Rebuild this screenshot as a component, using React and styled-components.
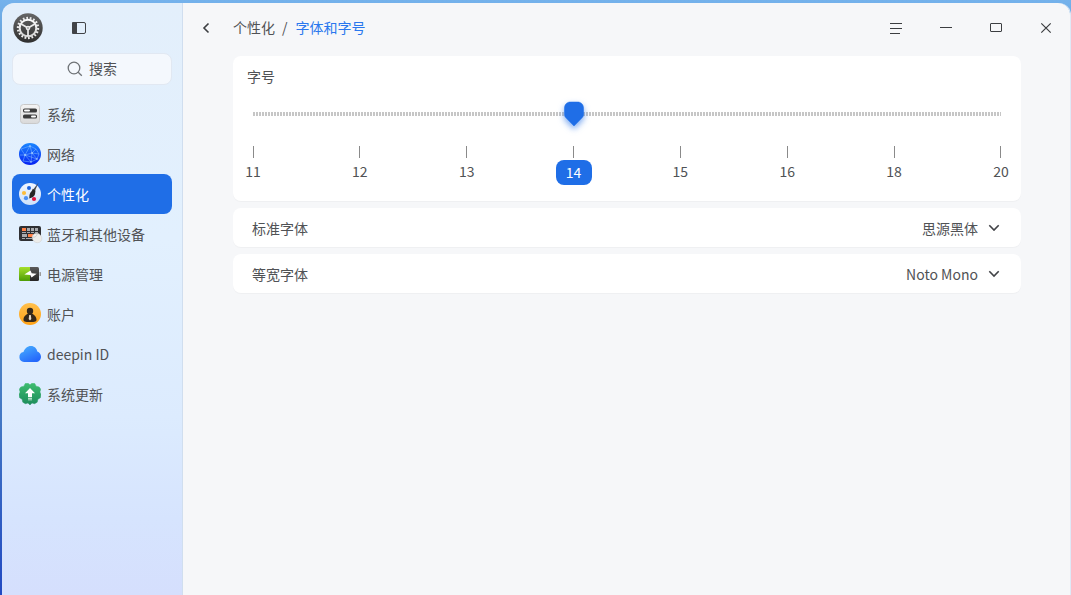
import React, { useState } from 'react';
import styled, { createGlobalStyle } from 'styled-components';

const sizes = [11, 12, 13, 14, 15, 16, 18, 20];

function GearLogo() {
    return (
        <svg width="30" height="30" viewBox="0 0 30 30" aria-hidden="true">
            <defs>
                <linearGradient id="gearBg" x1="0" y1="0" x2="0" y2="1">
                    <stop offset="0" stopColor="#666666" />
                    <stop offset="1" stopColor="#2f2f2f" />
                </linearGradient>
                <linearGradient id="gearFg" x1="0" y1="0" x2="0" y2="1">
                    <stop offset="0" stopColor="#ffffff" />
                    <stop offset="1" stopColor="#d2d2d2" />
                </linearGradient>
            </defs>
            <circle cx="15" cy="15" r="14.7" fill="url(#gearBg)" />
            <g fill="none" stroke="#ececec">
                <circle cx="15" cy="15" r="10" strokeWidth="2.4" pathLength="36" strokeDasharray="1 1" />
                <circle cx="15" cy="15" r="8.300" strokeWidth="2" stroke="url(#gearFg)" />
                <path d="M15 15v8M15 15L8.200 11M15 15l6.800-4" strokeWidth="1.700" />
            </g>
            <circle cx="15" cy="15" r="2.300" fill="#ececec" />
            <circle cx="15" cy="15" r="0.800" fill="#777777" />
        </svg>
    )
}

function SystemIcon() {
    return (
        <svg width="22" height="22" viewBox="0 0 22 22" aria-hidden="true">
            <defs>
                <linearGradient id="sysBg" x1="0" y1="0" x2="0" y2="1">
                    <stop offset="0" stopColor="#f4f4f4" />
                    <stop offset="1" stopColor="#d9d9d9" />
                </linearGradient>
            </defs>
            <rect x="1.500" y="1.500" width="19" height="19" rx="3" fill="url(#sysBg)" stroke="#c9c9c9" />
            <rect x="4" y="5.500" width="14" height="4" rx="1.600" fill="#3b3b3b" />
            <rect x="5" y="6.500" width="6" height="2" rx="1" fill="#ffffff" />
            <rect x="4" y="11.500" width="14" height="4" rx="1.600" fill="#3b3b3b" />
            <rect x="12" y="12.500" width="5" height="2" rx="1" fill="#ffffff" />
        </svg>
    )
}

function NetworkIcon() {
    return (
        <svg width="22" height="22" viewBox="0 0 22 22" aria-hidden="true">
            <defs>
                <linearGradient id="netBg" x1="0" y1="0" x2="0" y2="1">
                    <stop offset="0" stopColor="#1a86ff" />
                    <stop offset="1" stopColor="#0722f2" />
                </linearGradient>
            </defs>
            <circle cx="11" cy="11" r="11" fill="url(#netBg)" />
            <path
                d="M2 6l9-3 6 3 3 5-7-1-2-7-5 9 7-2 4-4M1 12l5 0 6 7 1-9M6 12L4 18l8 1 6-3-5-6M18 16l2-5M6 12L2 6M6 12l12 4"
                fill="none"
                stroke="#8cc4ff"
                strokeWidth="0.600"
                opacity="0.800"
            />
            <g fill="#c8e4ff">
                <circle cx="11" cy="3" r="0.700" />
                <circle cx="13" cy="10" r="0.800" />
                <circle cx="6" cy="12" r="0.800" />
                <circle cx="12" cy="19" r="0.700" />
                <circle cx="18" cy="16" r="0.700" />
            </g>
        </svg>
    )
}

function PaletteIcon() {
    return (
        <svg width="22" height="22" viewBox="0 0 22 22" aria-hidden="true">
            <defs>
                <linearGradient id="palBg" x1="0" y1="0" x2="0" y2="1">
                    <stop offset="0" stopColor="#f0f6ff" />
                    <stop offset="1" stopColor="#cfe1fa" />
                </linearGradient>
            </defs>
            <circle cx="11" cy="11" r="11" fill="url(#palBg)" />
            <circle cx="10" cy="5" r="2" fill="#1c62dd" />
            <circle cx="5" cy="10" r="2.100" fill="#fdbd3c" />
            <circle cx="7" cy="15.200" r="2.100" fill="#4b90f7" />
            <circle cx="15" cy="16" r="2.100" fill="#e0123f" />
            <path d="M19.600-.5L14.200 6.500l1.800 1.300z" fill="#4a4a4a" />
            <path d="M13.800 5.800l2.800 2c-.6 1.400-.2 2.200-.6 3.400-.7 2.300-2.700 3.600-5.800 4.200.4-1.600 0-2.700.5-4.200.6-2 2.300-2.800 3.100-5.400z" fill="#252525" />
        </svg>
    )
}

function KeyboardIcon() {
    return (
        <svg width="24" height="22" viewBox="0 0 24 22" aria-hidden="true">
            <rect x="0" y="3" width="22" height="15" rx="2" fill="#2f3033" />
            <g fill="#ff8147">
                <rect x="3" y="5" width="4" height="3" />
                <rect x="9" y="11" width="5" height="3" />
            </g>
            <g fill="#a9abae">
                <rect x="8" y="5" width="3" height="3" />
                <rect x="12" y="5" width="3" height="3" />
                <rect x="16" y="5" width="3" height="3" />
                <rect x="3" y="9" width="4" height="1" />
                <rect x="8" y="9" width="3" height="1" />
                <rect x="12" y="9" width="3" height="1" />
                <rect x="16" y="9" width="3" height="1" />
                <rect x="3" y="11" width="5" height="3" />
                <rect x="3" y="15" width="3" height="1" />
                <rect x="7" y="15" width="6" height="1" />
            </g>
            <ellipse cx="18" cy="15" rx="5" ry="4.500" transform="rotate(40 18 15)" fill="#ececea" stroke="#cfcfcd" strokeWidth="0.500" />
            <path d="M14 14c2 .6 3.600-.6 4.500-3.500" fill="none" stroke="#bdbdbb" strokeWidth="0.600" />
        </svg>
    )
}

function BatteryIcon() {
    return (
        <svg width="22" height="22" viewBox="0 0 22 22" aria-hidden="true">
            <defs>
                <linearGradient id="batGreen" x1="0" y1="0" x2="0" y2="1">
                    <stop offset="0" stopColor="#a5df2c" />
                    <stop offset="1" stopColor="#4c9c05" />
                </linearGradient>
                <linearGradient id="batDark" x1="0" y1="0" x2="0" y2="1">
                    <stop offset="0" stopColor="#5a5a5a" />
                    <stop offset="1" stopColor="#252525" />
                </linearGradient>
            </defs>
            <path d="M11 4h7.500a1.500 1.500 0 0 1 1.500 1.500v11a1.500 1.500 0 0 1-1.500 1.500H11z" fill="url(#batDark)" />
            <path d="M1.500 4H11v14H1.500A1.500 1.500 0 0 1 0 16.500v-11A1.500 1.500 0 0 1 1.500 4z" fill="url(#batGreen)" />
            <rect x="20.500" y="9" width="1.500" height="4" rx="0.500" fill="#9a9a9a" />
            <path d="M11.500 7.500l1.200 2.700 5 .5-5.200 3.800-1.200-2.500-6-.5z" fill="#ffffff" />
        </svg>
    )
}

function AccountIcon() {
    return (
        <svg width="22" height="22" viewBox="0 0 22 22" aria-hidden="true">
            <defs>
                <linearGradient id="accBg" x1="0" y1="0" x2="0" y2="1">
                    <stop offset="0" stopColor="#ffc04d" />
                    <stop offset="1" stopColor="#ffa216" />
                </linearGradient>
            </defs>
            <circle cx="11" cy="11" r="11" fill="url(#accBg)" />
            <circle cx="11" cy="8" r="3.200" fill="#35291b" />
            <path d="M9.500 10h3c.3 1.200 4.800 1.800 5 6.500.1 2-1.500 2.500-6.500 2.500s-6.600-.5-6.500-2.500c.2-4.700 4.700-5.300 5-6.500z" fill="#35291b" />
            <path d="M10.200 12h1.600l.5 4L11 17.500 9.700 16z" fill="#e9dccb" />
        </svg>
    )
}

function CloudIcon() {
    return (
        <svg width="22" height="22" viewBox="0 0 22 22" aria-hidden="true">
            <defs>
                <linearGradient id="cloudBg" x1="0" y1="0" x2="0.600" y2="1">
                    <stop offset="0" stopColor="#48b2ff" />
                    <stop offset="1" stopColor="#2668fb" />
                </linearGradient>
            </defs>
            <path
                d="M5 19a5 5 0 0 1-.5-9.900C5.400 5.700 8.400 3 12 3c3.300 0 5.700 2.300 6.300 5.600C20.500 9.400 22 11.300 22 13.700 22 16.700 19.700 19 17 19z"
                fill="url(#cloudBg)"
            />
        </svg>
    )
}

function UpdateIcon() {
    return (
        <svg width="22" height="22" viewBox="0 0 22 22" aria-hidden="true">
            <defs>
                <linearGradient id="updBg" gradientUnits="userSpaceOnUse" x1="0" y1="0" x2="0" y2="22">
                    <stop offset="0" stopColor="#3fbd6f" />
                    <stop offset="1" stopColor="#1c8c5c" />
                </linearGradient>
            </defs>
            <path
                d="M6.200.6L9 .2 11 1.800 13 .2l2.800.4 1.300 2.600 3.100.8 1.500 2.300-.8 2.700L22 11.500l-.6 3.200-2.500 1.500-.7 3-2.600 1.500-2.600-.7L11 22l-2-2-2.600.7-2.600-1.500-.7-3-2.500-1.500L0 11.500 1.100 9 .3 6.300 1.800 4l3.100-.8z"
                fill="url(#updBg)"
                stroke="url(#updBg)"
                strokeWidth="0.500"
                strokeLinejoin="round"
            />
            <path d="M11 5l5 5.300h-3V14H9v-3.700H6z" fill="#ffffff" />
            <path d="M9 14.700h4v1H9zM9 16.400h4v.8H9z" fill="#e6f7ec" />
        </svg>
    )
}

const menu = [
    { name: '系统', Icon: SystemIcon },
    { name: '网络', Icon: NetworkIcon },
    { name: '个性化', Icon: PaletteIcon },
    { name: '蓝牙和其他设备', Icon: KeyboardIcon },
    { name: '电源管理', Icon: BatteryIcon },
    { name: '账户', Icon: AccountIcon },
    { name: 'deepin ID', Icon: CloudIcon },
    { name: '系统更新', Icon: UpdateIcon },
];

function Sidebar() {
    const [active, setActive] = useState('个性化');

    return (
        <SidebarStyled>
            <div className="side-head">
                <GearLogo />
                <IconButton type="button" aria-label="侧边栏">
                    <svg width="14" height="12" viewBox="0 0 14 12">
                        <rect x="0.500" y="0.500" width="13" height="11" rx="1.500" fill="none" stroke="#414347" />
                        <path d="M1 0h4v12H1a1 1 0 0 1-1-1V1a1 1 0 0 1 1-1z" fill="#414347" />
                    </svg>
                </IconButton>
            </div>
            <SearchBox>
                <svg width="16" height="16" viewBox="0 0 16 16" aria-hidden="true">
                    <circle cx="7" cy="7" r="5.800" fill="none" stroke="#6f7377" strokeWidth="1.300" />
                    <path d="M11.200 11.200l3.600 3.600" stroke="#6f7377" strokeWidth="1.300" />
                </svg>
                <input type="text" aria-label="搜索" placeholder="搜索" />
            </SearchBox>
            <nav>
                {menu.map(({ name, Icon }) => (
                    <MenuItem
                        key={name}
                        href="#"
                        $active={name === active}
                        onClick={(e) => {
                            e.preventDefault();
                            setActive(name);
                        }}
                    >
                        <span className="icon"><Icon /></span>
                        {name}
                    </MenuItem>
                ))}
            </nav>
        </SidebarStyled>
    )
}

function TitleBar() {
    return (
        <TitleBarStyled>
            <IconButton type="button" aria-label="返回">
                <svg width="8" height="12" viewBox="0 0 8 12">
                    <path d="M6.500 1.500L2 6l4.500 4.500" fill="none" stroke="#3c3e41" strokeWidth="1.600" />
                </svg>
            </IconButton>
            <Breadcrumb>
                <a href="#">个性化</a>
                <span>/</span>
                <a href="#" className="current" aria-current="page">字体和字号</a>
            </Breadcrumb>
            <div className="controls">
                <IconButton type="button" aria-label="菜单">
                    <svg width="12" height="12" viewBox="0 0 12 12">
                        <path d="M0 1.500h12M0 6.500h12M0 11.500h10" stroke="#3c3e41" />
                    </svg>
                </IconButton>
                <IconButton type="button" aria-label="最小化">
                    <svg width="12" height="12" viewBox="0 0 12 12">
                        <path d="M0 5.500h12" stroke="#3c3e41" />
                    </svg>
                </IconButton>
                <IconButton type="button" aria-label="最大化">
                    <svg width="12" height="12" viewBox="0 0 12 12">
                        <rect x="0.500" y="1.500" width="11" height="8" rx="0.500" fill="none" stroke="#3c3e41" />
                    </svg>
                </IconButton>
                <IconButton type="button" aria-label="关闭">
                    <svg width="12" height="12" viewBox="0 0 12 12">
                        <path d="M1.300 1.300l9.400 9.400M10.700 1.300l-9.400 9.400" stroke="#3c3e41" strokeWidth="1.200" />
                    </svg>
                </IconButton>
            </div>
        </TitleBarStyled>
    )
}

function FontSize() {
    const [index, setIndex] = useState(3);

    return (
        <SizeCard>
            <label htmlFor="font-size">字号</label>
            <Slider>
                <input
                    id="font-size"
                    type="range"
                    min="0"
                    max={sizes.length - 1}
                    value={index}
                    onChange={(e) => setIndex(Number(e.target.value))}
                />
                <div className="rail">
                    <svg
                        width="22"
                        height="26"
                        viewBox="0 0 22 26"
                        style={{ left: `${(index / (sizes.length - 1)) * 100}%` }}
                        aria-hidden="true"
                    >
                        <path
                            d="M7.500 1h7c3.600 0 6 2.600 6 6v6.500c0 1.500-.5 2.300-1.400 3.200L11 25l-8.100-8.300C2 15.800 1.500 15 1.500 13.500V7c0-3.400 2.400-6 6-6z"
                            fill="#1f6ee7"
                            stroke="#1f6ee7"
                            strokeWidth="0.500"
                        />
                    </svg>
                </div>
            </Slider>
            <Ticks>
                {sizes.map((size, i) => (
                    <Tick key={size} type="button" $active={i === index} onClick={() => setIndex(i)}>
                        <span>{size}</span>
                    </Tick>
                ))}
            </Ticks>
        </SizeCard>
    )
}

function FontRow({ id, label, options }) {
    return (
        <RowCard>
            <label htmlFor={id}>{label}</label>
            <select id={id}>
                {options.map((o) => <option key={o}>{o}</option>)}
            </select>
            <svg width="12" height="8" viewBox="0 0 12 8" aria-hidden="true">
                <path d="M1.300 1.300L6 6l4.700-4.700" fill="none" stroke="#414347" strokeWidth="1.600" />
            </svg>
        </RowCard>
    )
}

function App() {
    return (
        <Desktop>
            <GlobalStyle />
            <WindowStyled>
                <Sidebar />
                <Content>
                    <TitleBar />
                    <main>
                        <FontSize />
                        <FontRow id="standard-font" label="标准字体" options={['思源黑体']} />
                        <FontRow id="mono-font" label="等宽字体" options={['Noto Mono']} />
                    </main>
                </Content>
            </WindowStyled>
        </Desktop>
    )
}

const GlobalStyle = createGlobalStyle`
    *{
        box-sizing: border-box;
    }
    body{
        margin: 0;
    }
    body, button, input, select{
        font-family: "Noto Sans CJK SC", "Noto Sans", sans-serif;
        font-size: 14px;
        line-height: 20px;
        color: #505255;
    }
    a{
        color: inherit;
        text-decoration: none;
    }
    svg{
        display: block;
        flex: none;
    }
`;

const Desktop = styled.div`
    display: flex;
    min-height: 100vh;
    padding: 3px 1px 0 2px;
    background: linear-gradient(180deg, #74b2ec 0, #5a94cb 80px, #5590ca 270px, #4377c4 420px, #2149c2 100%);
`;

const WindowStyled = styled.div`
    flex: 1;
    display: flex;
    border-radius: 12px 12px 0 0;
    overflow: hidden;
    box-shadow: 1px 0 0 #dfeaf7;
`;

const SidebarStyled = styled.aside`
    flex: none;
    width: 181px;
    padding: 0 10px;
    border-right: 1px solid #d0deef;
    background: linear-gradient(180deg, #e3effb 0, #e2f0fe 40%, #dcebfe 70%, #d6e4fe 87%, #d5dffd 100%);
    .side-head{
        display: flex;
        align-items: center;
        gap: 20px;
        height: 50px;
        padding-left: 1px;
    }
    nav{
        display: flex;
        flex-direction: column;
        margin-top: 9px;
    }
`;

const IconButton = styled.button`
    display: flex;
    align-items: center;
    justify-content: center;
    width: 32px;
    height: 32px;
    padding: 0;
    border: 0;
    border-radius: 8px;
    background: transparent;
    &:hover{
        background: rgba(0, 0, 0, 0.08);
    }
`;

const SearchBox = styled.label`
    display: flex;
    align-items: center;
    justify-content: center;
    gap: 6px;
    height: 32px;
    border: 1px solid #e1e8f2;
    border-radius: 8px;
    background: #f4f8fd;
    input{
        width: 28px;
        height: 20px;
        margin-bottom: 2px;
        padding: 0;
        border: 0;
        outline: 0;
        background: transparent;
    }
    input::placeholder{
        color: #505255;
        opacity: 1;
    }
    input:focus{
        width: 110px;
    }
`;

const MenuItem = styled.a`
    display: flex;
    align-items: center;
    gap: 6px;
    height: 40px;
    padding-left: 7px;
    border-radius: 8px;
    color: ${({ $active }) => ($active ? '#ffffff' : '#505255')};
    background: ${({ $active }) => ($active ? '#1f6ee7' : 'transparent')};
    .icon{
        width: 22px;
    }
`;

const Content = styled.div`
    flex: 1;
    min-width: 0;
    background: #f6f7f9;
    main{
        display: flex;
        flex-direction: column;
        gap: 7px;
        padding: 3px 49px 20px 50px;
    }
`;

const TitleBarStyled = styled.header`
    display: flex;
    align-items: center;
    height: 50px;
    padding: 0 8px 0 7px;
    .controls{
        display: flex;
        gap: 18px;
        margin-left: auto;
    }
`;

const Breadcrumb = styled.nav`
    display: flex;
    gap: 7px;
    margin-left: 11px;
    padding-bottom: 2px;
    .current{
        margin-left: 1px;
        color: #2a78ee;
    }
`;

const Card = styled.section`
    border-radius: 8px;
    background: #ffffff;
    box-shadow: 0 1px 1px rgba(0, 0, 0, 0.03);
`;

const SizeCard = styled(Card)`
    padding: 10px 2px 16px;
    > label{
        display: block;
        padding-left: 12px;
    }
`;

const Slider = styled.div`
    position: relative;
    height: 26px;
    margin: 15px 7px 0;
    input{
        display: block;
        width: 100%;
        height: 26px;
        margin: 0;
        opacity: 0;
    }
    input::-webkit-slider-thumb{
        width: 22px;
    }
    .rail{
        position: absolute;
        inset: 11px 11px;
        height: 4px;
        background: repeating-linear-gradient(90deg, #c6c6c6 0 2px, #ffffff 2px 3px);
        pointer-events: none;
    }
    .rail svg{
        position: absolute;
        top: -11px;
        transform: translateX(-50%);
        overflow: visible;
        filter: drop-shadow(0 3px 3px rgba(31, 110, 231, 0.6));
    }
`;

const Ticks = styled.div`
    display: flex;
    justify-content: space-between;
    margin-top: 19px;
`;

const Tick = styled.button`
    display: flex;
    flex-direction: column;
    align-items: center;
    gap: 2px;
    width: 36px;
    padding: 0;
    border: 0;
    background: transparent;
    &::before{
        content: "";
        width: 1px;
        height: 12px;
        background: #8a8a8a;
    }
    span{
        width: 36px;
        height: 25px;
        border-radius: 8px;
        line-height: ${({ $active }) => ($active ? '25px' : '22px')};
        color: ${({ $active }) => ($active ? '#ffffff' : '#505255')};
        background: ${({ $active }) => ($active ? '#1f6ee7' : 'transparent')};
    }
`;

const RowCard = styled(Card)`
    display: flex;
    align-items: center;
    justify-content: space-between;
    height: 39px;
    padding: 0 21px 0 19px;
    select{
        margin-left: auto;
        margin-right: 10px;
        padding: 0;
        border: 0;
        outline: 0;
        appearance: none;
        background: transparent;
        text-align-last: right;
    }
`;

export default App
